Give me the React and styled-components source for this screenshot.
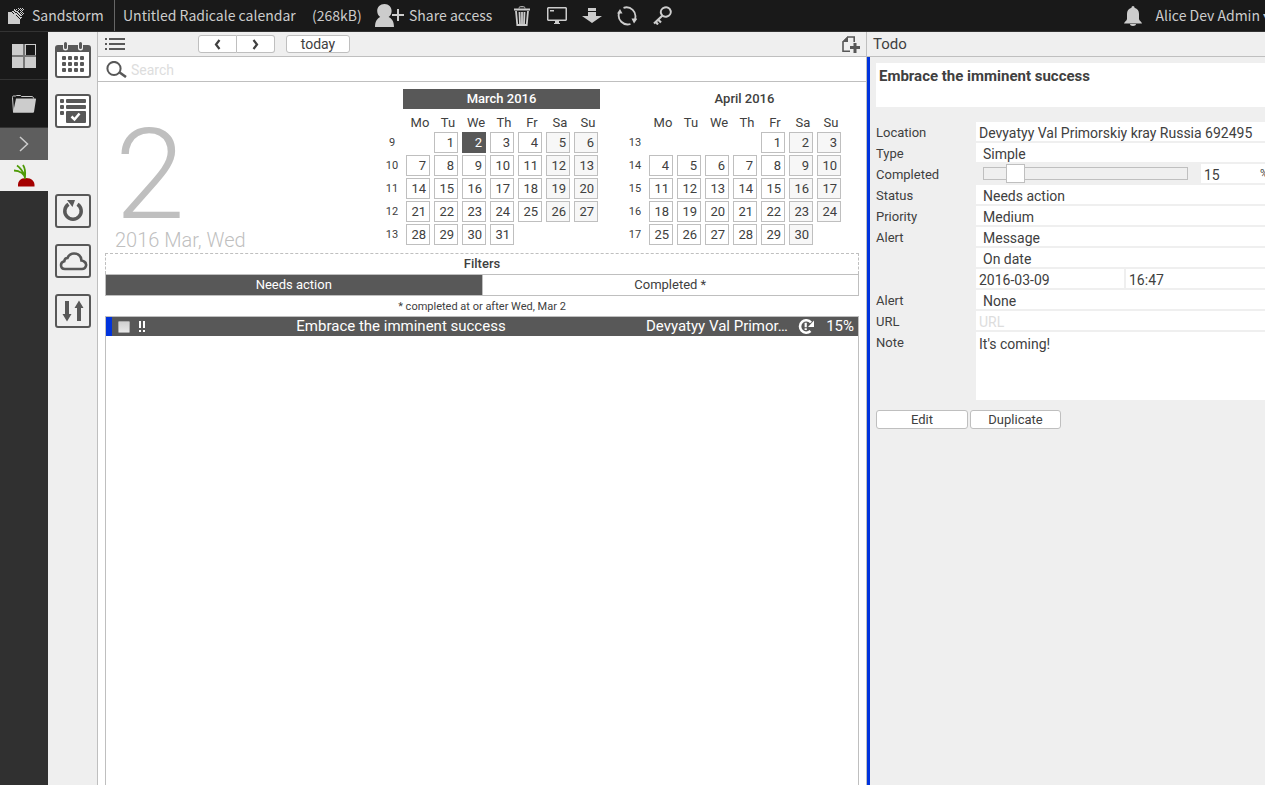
import React from "react";
import styled, { createGlobalStyle } from "styled-components";

const ink = "#404040";
const dark = "#585858";
const line = "#bfbfbf";
const panel = "#efefef";
const blue = "#0033dd";

const GlobalStyle = createGlobalStyle`
  * { box-sizing: border-box; }
  body {
    margin: 0;
    overflow: hidden;
    background: #fff;
    color: ${ink};
    font: 13px/19px Roboto, "Liberation Sans", sans-serif;
  }
  button, input, select, textarea { font: inherit; color: inherit; margin: 0; }
  button { padding: 0; border: 0; background: none; cursor: pointer; }
  svg { display: block; flex: none; }
`;

const Page = styled.div`
  display: flex;
  flex-direction: column;
  height: 100vh;
`;

/* ---------- top bar ---------- */

const TopBar = styled.header`
  display: flex;
  align-items: center;
  flex: none;
  height: 32px;
  border-bottom: 1px solid #333;
  background: #191919;
  color: #ccc;
  font: 14px/31px "Noto Sans CJK JP", "Noto Sans", sans-serif;
  white-space: nowrap;
  overflow: hidden;
`;

const Brand = styled.a`
  display: flex;
  align-items: center;
  gap: 8px;
  height: 31px;
  width: 115px;
  padding-left: 8px;
  border-right: 1px solid #666;
  color: inherit;
  text-decoration: none;
`;

const GrainTitle = styled.button`
  width: 189px;
  padding-left: 8px;
  text-align: left;
`;

const GrainSize = styled.span`
  width: 71px;
  padding-left: 8px;
`;

const ShareButton = styled.button`
  display: flex;
  align-items: center;
  gap: 5px;
  width: 132px;
`;

const TopIcons = styled.div`
  display: flex;
  align-items: center;
  gap: 5px;
`;

const TopIconButton = styled.button`
  display: flex;
  align-items: center;
  justify-content: center;
  width: 30px;
  height: 31px;
`;

const Account = styled.div`
  display: flex;
  align-items: center;
  gap: 14px;
  margin-left: auto;
`;

const AccountButton = styled.button`
  display: flex;
  align-items: center;
  gap: 3px;
`;

const CaretClip = styled.span`
  display: block;
  width: 2px;
  overflow: hidden;
`;

/* ---------- body ---------- */

const Body = styled.div`
  display: flex;
  flex: 1;
  min-height: 0;
`;

const GrainBar = styled.nav`
  flex: none;
  width: 48px;
  background: #303030;
`;

const grainTones = {
  black: { bg: "#191919", height: 48, line: "#333" },
  grey: { bg: "#5e5e5e", height: 32, line: "#5e5e5e" },
  open: { bg: panel, height: 31, line: panel },
};

const GrainItem = styled.button`
  display: flex;
  align-items: center;
  justify-content: center;
  width: 100%;
  height: ${(p) => grainTones[p.$tone].height}px;
  border-bottom: 1px solid ${(p) => grainTones[p.$tone].line};
  background: ${(p) => grainTones[p.$tone].bg};
`;

const AppBar = styled.nav`
  display: flex;
  flex-direction: column;
  align-items: center;
  gap: 16px;
  flex: none;
  width: 50px;
  padding-top: 10px;
  border-right: 1px solid ${line};
  background: ${panel};
`;

const AppGroup = styled.div`
  display: flex;
  flex-direction: column;
  gap: 16px;
  margin-bottom: 50px;
`;

const Center = styled.main`
  display: flex;
  flex-direction: column;
  flex: 1;
  min-width: 0;
`;

const Toolbar = styled.div`
  display: flex;
  align-items: center;
  flex: none;
  height: 25px;
  padding: 0 6px 0 7px;
  border-bottom: 1px solid ${line};
  background: ${panel};
`;

const ButtonGroup = styled.div`
  display: flex;
  margin: 0 11px 0 73px;
`;

const PillButton = styled.button`
  display: flex;
  align-items: center;
  justify-content: center;
  width: ${(p) => p.$width}px;
  height: 18px;
  border: 1px solid ${line};
  border-radius: 3px;
  background: #fff;
  font-size: 14px;
  line-height: 16px;

  ${ButtonGroup} &:first-child { border-radius: 3px 0 0 3px; }
  ${ButtonGroup} &:last-child { border-radius: 0 3px 3px 0; border-left: 0; }
`;

const AddButton = styled.button`
  margin-left: auto;
`;

const SearchBar = styled.label`
  display: flex;
  align-items: center;
  gap: 4px;
  flex: none;
  height: 25px;
  padding: 0 8px;
  border-bottom: 1px solid ${line};
`;

const SearchInput = styled.input`
  flex: 1;
  border: 0;
  padding: 2px 0 0;
  outline: 0;
  background: none;
  font-size: 14px;
  &::placeholder { color: #ddd; }
`;

/* ---------- calendars ---------- */

const Overview = styled.section`
  display: flex;
  flex: none;
  gap: 19px;
  height: 171px;
  padding: 7px 21px 0 17px;
`;

const Today = styled.div`
  flex: 1;
  padding-top: 33px;
  color: ${line};
  font-weight: 300;
  margin-right: -19px;
`;

const BigDay = styled.div`
  font-size: 126px;
  line-height: 106px;
`;

const DateText = styled.div`
  font-size: 20px;
  line-height: 24px;
`;

const MonthTitle = styled.h2`
  width: 197px;
  margin: 0 0 3px 25px;
  background: ${(p) => (p.$active ? dark : "transparent")};
  color: ${(p) => (p.$active ? "#fff" : ink)};
  font-size: 13px;
  font-weight: 500;
  line-height: 20px;
  text-align: center;
`;

const MonthTable = styled.table`
  width: 224px;
  table-layout: fixed;
  border-collapse: separate;
  border-spacing: 4px 2px;
`;

const WeekdayHead = styled.th`
  height: 16px;
  padding: 1px 0 0 4px;
  width: ${(p) => (p.$narrow ? 20 : 24)}px;
  font-weight: 400;
  line-height: 15px;
`;

const WeekNumber = styled.th`
  padding: 0;
  font-size: 11px;
  font-weight: 400;
  line-height: 21px;
`;

const DayCell = styled.td`
  height: 21px;
  padding: 0 3px 0 0;
  border: 1px solid ${(p) => (p.$blank ? "transparent" : p.$selected ? dark : line)};
  background: ${(p) => (p.$blank ? "transparent" : p.$selected ? dark : p.$weekend ? "#f7f7f7" : "#fff")};
  color: ${(p) => (p.$selected ? "#fff" : ink)};
  line-height: 19px;
  text-align: right;
`;

/* ---------- task list ---------- */

const Filters = styled.section`
  flex: none;
  margin: 0 7px;
  text-align: center;
`;

const FiltersTitle = styled.h2`
  margin: 0;
  border: 1px dashed ${line};
  border-bottom: 0;
  font-size: 13px;
  font-weight: 500;
  line-height: 20px;
`;

const FilterTabs = styled.div`
  display: flex;
  border: 1px solid ${line};
`;

const FilterTab = styled.button`
  flex: 1;
  line-height: 20px;
  background: ${(p) => (p.$active ? dark : "#fff")};
  color: ${(p) => (p.$active ? "#fff" : ink)};
  & + & { border-left: 1px solid ${line}; }
`;

const FilterNote = styled.p`
  margin: 0;
  padding-top: 1px;
  font-size: 11px;
  line-height: 19px;
`;

const TaskList = styled.ul`
  flex: 1;
  margin: 0 7px;
  padding: 0;
  border: 1px solid ${line};
  border-bottom: 0;
  list-style: none;
`;

const TaskRow = styled.li`
  display: flex;
  align-items: center;
  height: 19px;
  padding: 0 4px 0 6px;
  border-left: 6px solid ${blue};
  background: ${dark};
  color: #fff;
  font-size: 15px;
`;

const TaskCheck = styled.input`
  appearance: none;
  flex: none;
  width: 12px;
  height: 12px;
  border: 1px solid #aaa;
  border-radius: 1px;
  background: linear-gradient(#d0d0d0, #e8e8e8);
`;

const TaskPriority = styled.span`
  display: flex;
  width: 26px;
  padding-left: 9px;
`;

const TaskName = styled.span`
  flex: 1;
  text-align: center;
`;

const TaskPlace = styled.span`
  width: 146px;
  margin-right: 6px;
  overflow: hidden;
  text-overflow: ellipsis;
  white-space: nowrap;
`;

const TaskPercent = styled.span`
  width: 40px;
  text-align: right;
`;

/* ---------- details ---------- */

const Details = styled.aside`
  display: flex;
  flex-direction: column;
  flex: none;
  width: 399px;
  border-left: 1px solid ${line};
  background: ${panel};
`;

const DetailsTitle = styled.h2`
  margin: 0;
  padding-left: 6px;
  border-bottom: 1px solid ${line};
  font-size: 15px;
  font-weight: 400;
  line-height: 24px;
`;

const Form = styled.form`
  flex: 1;
  padding: 6px 0 0 6px;
  border-left: 3px solid ${blue};
`;

const TitleBox = styled.textarea`
  display: block;
  width: 100%;
  height: 44px;
  margin-bottom: 15px;
  padding: 3px;
  border: 0;
  resize: none;
  background: #fff;
  font-size: 15px;
  font-weight: 700;
  line-height: 20px;
`;

const Fields = styled.div`
  display: grid;
  grid-template-columns: 100px 1fr;
  row-gap: 2px;
`;

const FieldLabel = styled.label`
  height: 19px;
  line-height: 21px;
`;

const TextField = styled.input`
  width: 100%;
  min-width: 0;
  height: 19px;
  padding: 2px 3px 0;
  border: 0;
  background: #fff;
  font-size: 14px;
  line-height: 17px;
  &::placeholder { color: #ddd; }
`;

const SelectField = styled.select`
  appearance: none;
  grid-column: 2;
  height: 19px;
  padding: 3px 7px 0;
  border: 0;
  border-radius: 0;
  background: #fff;
  font-size: 14px;
  line-height: 16px;
`;

const SplitRow = styled.div`
  display: grid;
  grid-column: 2;
  grid-template-columns: 148px 1fr;
  gap: 2px;
`;

const ProgressRow = styled.div`
  display: flex;
  align-items: center;
  gap: 13px;
  height: 19px;
  padding-left: 7px;
`;

const SliderTrack = styled.div`
  display: flex;
  align-items: center;
  flex: none;
  width: 205px;
  height: 13px;
  border: 1px solid ${line};
`;

const Slider = styled.input`
  appearance: none;
  flex: none;
  width: 223px;
  height: 19px;
  margin: 0 -9px;
  background: transparent;
  &::-webkit-slider-thumb {
    appearance: none;
    width: 19px;
    height: 19px;
    border: 1px solid ${line};
    background: #fff;
  }
`;

const PercentField = styled.label`
  display: flex;
  flex: 1;
  min-width: 0;
  overflow: hidden;
  background: #fff;
  font-size: 11px;
`;

const PercentInput = styled(TextField)`
  flex: none;
  width: 59px;
`;

const NoteBox = styled.textarea`
  height: 68px;
  padding: 3px;
  border: 0;
  resize: none;
  background: #fff;
  font-size: 14px;
  line-height: 18px;
`;

const Actions = styled.div`
  display: flex;
  gap: 2px;
  margin-top: 10px;
`;

const ActionButton = styled.button`
  width: ${(p) => p.$width}px;
  height: 19px;
  border: 1px solid ${line};
  border-radius: 3px;
  background: #fff;
  line-height: 17px;
`;

/* ---------- icons ---------- */

const light = "#ccc";

const LogoIcon = () => (
  <svg width="16" height="16" viewBox="0 0 16 16" fill={light}>
    <path d="M0 4h4v1h1v1h2v1h1v1h1v1h1v1h1v1h1v5H0z" />
    <path d="M4 3h2v1h1v1h2v1h1v1h1v1h1v1h1v2h-1v-1h-1V9h-1V8H9V7H7V6H6V5H5V4H4z" />
    <path d="M6 1h1v1h1v1h2v1h1v1h1v1h1v1h1v1h-2V7h-1V6h-1V5H9V4H7V3H6z" />
    <path d="M8 1h1v1H8zM10 0h1v1h-1zM10 2h1v1h-1zM11 1h1v1h-1zM12 0h1v1h-1zM12 2h1v1h-1zM12 4h1v1h-1zM13 1h1v1h-1zM13 3h1v1h-1zM14 0h1v1h-1zM14 2h1v1h-1zM14 4h1v1h-1zM15 1h1v1h-1zM15 5h1v1h-1zM14 6h1v1h-1zM13 5h1v1h-1zM13 9h1v1h-1z" />
  </svg>
);

const ShareIcon = () => (
  <svg width="29" height="25" viewBox="0 0 29 25" fill={light}>
    <path d="M9.500 1C5 1 2.200 4 2.200 8c0 3 1.500 4.800 3 6C2.500 15.500 0 18 0 24h19c0-6-2.500-8.500-5.400-10 1.700-1.300 3-3 3-6 0-4-2.800-7-7.100-7z" />
    <path d="M22 6h2v5h5v2h-5v5h-2v-5h-5v-2h5z" />
  </svg>
);

const TrashIcon = () => (
  <svg width="16" height="20" viewBox="0 0 16 20" fill="none" stroke={light}>
    <path d="M5 2.500C5 .5 6 .7 8 .7s3 0 3 1.800" />
    <path d="M0 3.500h16" strokeWidth="2" />
    <path d="M2 5l1.300 14h9.400L14 5M5.500 6l.5 12M8 6v12M10.500 6L10 18" strokeWidth="1.800" />
  </svg>
);

const MonitorIcon = () => (
  <svg width="20" height="17" viewBox="0 0 20 17" fill={light}>
    <path fillRule="evenodd" d="M1 0h18l1 1v12l-1 1h-7v2h1v1H7v-1h1v-2H1l-1-1V1zM1.500 1.500v11h17v-11z" />
    <path d="M3 3h4v1.500H3z" />
  </svg>
);

const DownloadIcon = () => (
  <svg width="20" height="15" viewBox="0 0 20 15" fill={light}>
    <path d="M6 0h8v3H6zM6 4h8v4h6l-10 7L0 8h6z" />
  </svg>
);

const RefreshIcon = () => (
  <svg width="20" height="20" viewBox="0 0 20 20" fill="none" stroke={light} strokeWidth="1.800">
    <path d="M6.500 1.800A9 9 0 0 1 18 13M13.500 18A9 9 0 0 1 2.200 6.500" />
    <path d="M14.500 12.500h6L17 17.500zM5.500 7.500H0L3 3z" fill={light} stroke="none" />
  </svg>
);

const KeyIcon = () => (
  <svg width="19" height="19" viewBox="0 0 19 19" fill="none" stroke={light}>
    <ellipse cx="12.800" cy="6" rx="5" ry="4.600" strokeWidth="2" transform="rotate(-15 12.800 6)" />
    <path d="M9.500 9.500L1 17.500M5 13.500l3 3M2.500 15.500l2.500 3" strokeWidth="2.200" />
  </svg>
);

const BellIcon = () => (
  <svg width="18" height="20" viewBox="0 0 18 20" fill={light}>
    <path d="M9 0c1 0 1.500.7 1.500 1.800C13.600 2.600 15 5 15 8v5c0 1.500 3 3 3 4.500H0C0 16 3 14.500 3 13V8c0-3 1.400-5.400 4.500-6.200C7.500.7 8 0 9 0zM6 18h6c0 1.300-1.200 2-3 2s-3-.7-3-2z" />
  </svg>
);

const AppsIcon = () => (
  <svg width="24" height="24" viewBox="0 0 24 24">
    <path fill={light} d="M0 0h24v24H0z" />
    <path fill="#777" d="M11 0h2v11h11v2H13v11h-2V13H0v-2h11z" />
    <path fill="#191919" d="M14 1h9v10h-9z" />
  </svg>
);

const FolderIcon = () => (
  <svg width="24" height="18" viewBox="0 0 24 18">
    <path fill="none" stroke={light} d="M1.500 17L.5 2.500C.5 1 1 1 2 1h1.500l1-.5h4l1 1H19c2 0 2.500.5 2.500 2" />
    <path fill={light} d="M4 3.500h19.500l.5.500-2 13-.7.700H1z" />
  </svg>
);

const ChevronIcon = () => (
  <svg width="10" height="16" viewBox="0 0 10 16" fill="none" stroke={light} strokeWidth="1.500">
    <path d="M1 1l7.500 7L1 15" />
  </svg>
);

const RadishIcon = () => (
  <svg width="22" height="23" viewBox="0 0 22 23" fill="none">
    <path d="M5 22.500C4.500 17 7.500 14 13 14s9 3 8.500 8.500z" fill="#a40000" />
    <path d="M12.500 15C11.500 10 7 6.500 1 6.500M12 12C10 8 8 4 4 1.500M12 13c.5-5 0-9-2-12" stroke="#4e9a06" strokeWidth="1.800" />
  </svg>
);

const CalendarIcon = () => (
  <svg width="36" height="36" viewBox="0 0 36 36">
    <rect x="1" y="4" width="34" height="31" rx="2" fill="#fff" stroke={dark} strokeWidth="2" />
    <path fill={dark} d="M1 4h34v6H1z" />
    <g stroke={panel} strokeWidth="5" strokeLinecap="round"><path d="M10.500 1v5M25.500 1v5" /></g>
    <g stroke={dark} strokeWidth="3" strokeLinecap="round"><path d="M10.500 1.500v4M25.500 1.500v4" /></g>
    <g fill={dark}>
      {[14, 20, 26].map((y) =>
        [7, 13, 19, 25].map((x) => <rect key={`${x}-${y}`} x={x} y={y} width="4" height="4" rx="1" />)
      )}
    </g>
  </svg>
);

const TodoIcon = () => (
  <svg width="36" height="34" viewBox="0 0 36 34">
    <rect x="1" y="1" width="34" height="32" rx="2" fill="#fff" stroke={dark} strokeWidth="2" />
    <g fill={dark}>
      <rect x="5" y="5" width="4" height="4" rx="1" />
      <rect x="5" y="11" width="4" height="4" rx="1" />
      <rect x="5" y="17" width="4" height="4" rx="1" />
      <rect x="11" y="5" width="20" height="4" rx="1" />
      <rect x="11" y="11" width="20" height="4" rx="1" />
      <rect x="11" y="17" width="20" height="12" rx="1" />
    </g>
    <path d="M16.500 22.500l3 3 5-6" fill="none" stroke="#fff" strokeWidth="2.500" />
  </svg>
);

const Frame = ({ children }) => (
  <svg width="36" height="34" viewBox="0 0 36 34" fill="none" stroke={dark}>
    <rect x="1" y="1" width="34" height="32" rx="2" strokeWidth="2" />
    {children}
  </svg>
);

const ReloadIcon = () => (
  <Frame>
    <path d="M22.500 10.200A8.200 8.200 0 1 1 13.500 10.200" strokeWidth="3.500" />
    <path d="M12 6h8l-2.500 7z" fill={dark} stroke="none" />
  </Frame>
);

const CloudIcon = () => (
  <Frame>
    <path d="M10 25h17a4 4 0 0 0 2-7.500c-1-.8-2.500-1-2.500-1C26 12 23 9.500 19 9.500c-3.500 0-5.500 2-6.500 4.500-2.500 0-3 1.500-3.200 3.200C7 17.700 6 19 6 21c0 2.300 1.500 4 4 4z" strokeWidth="2.600" />
  </Frame>
);

const SortIcon = () => (
  <Frame>
    <path d="M10 7h4v13h2.500L12 27.500 7.500 20H10zM22 27h4V14h2.500L24 6.500 19.500 14H22z" fill={dark} stroke="none" />
  </Frame>
);

const ListIcon = () => (
  <svg width="20" height="12" viewBox="0 0 20 12" fill={dark}>
    <path d="M0 0h2v2H0zM4 0h16v2H4zM0 5h2v2H0zM4 5h16v2H4zM0 10h2v2H0zM4 10h16v2H4z" />
  </svg>
);

const ArrowIcon = ({ flip }) => (
  <svg width="7" height="11" viewBox="0 0 7 11" fill="none" stroke={ink} strokeWidth="2.200">
    <path d={flip ? "M1.500 1L5 5.500l-3.500 4.500" : "M5.500 1L2 5.500 5.500 10"} />
  </svg>
);

const AddIcon = () => (
  <svg width="18" height="17" viewBox="0 0 18 17">
    <path fill="none" stroke={dark} strokeWidth="1.600" d="M8 15.200H1V6l5-5h6.200v5" />
    <path fill={dark} d="M0 6l6-6v6zM11.500 7h3v3h3.500v3h-3.500v4h-3v-4H8v-3h3.500z" />
  </svg>
);

const SearchIcon = () => (
  <svg width="21" height="17" viewBox="0 0 21 17" fill="none" stroke={dark}>
    <circle cx="8" cy="7.500" r="6.600" strokeWidth="2" />
    <path d="M13 11l7 5" strokeWidth="2.600" />
  </svg>
);

const UrgentIcon = () => (
  <svg width="7" height="11" viewBox="0 0 7 11" fill="#fff">
    <path d="M0 0h2v7H0zM0 9h2v2H0zM4 0h2v7H4zM4 9h2v2H4z" />
  </svg>
);

const AlarmIcon = () => (
  <svg width="16" height="15" viewBox="0 0 16 15" fill="none" stroke="#fff">
    <path d="M13 3.500A6.200 6.200 0 1 0 12.500 12" strokeWidth="2.600" />
    <path d="M10 8h6V1.500z" fill="#fff" stroke="none" />
    <path d="M7.700 3.800v4.500M7.700 9.300V11" strokeWidth="2.200" />
  </svg>
);

/* ---------- page ---------- */

const weekdays = ["Mo", "Tu", "We", "Th", "Fr", "Sa", "Su"];

function Month({ title, firstWeek, offset, days, selected }) {
  const weeks = [0, 1, 2, 3, 4];
  return (
    <div>
      <MonthTitle $active={Boolean(selected)}>{title}</MonthTitle>
      <MonthTable aria-label={title}>
        <thead>
          <tr>
            <WeekdayHead $narrow />
            {weekdays.map((d) => (
              <WeekdayHead key={d}>{d}</WeekdayHead>
            ))}
          </tr>
        </thead>
        <tbody>
          {weeks.map((w) => (
            <tr key={w}>
              <WeekNumber>{firstWeek + w}</WeekNumber>
              {weekdays.map((d, i) => {
                const day = w * 7 + i - offset + 1;
                const blank = day < 1 || day > days;
                return (
                  <DayCell key={d} $blank={blank} $selected={day === selected} $weekend={i > 4}>
                    {blank ? null : day}
                  </DayCell>
                );
              })}
            </tr>
          ))}
        </tbody>
      </MonthTable>
    </div>
  );
}

function SelectRow({ id, label, value, options }) {
  return (
    <>
      {label && <FieldLabel htmlFor={id}>{label}</FieldLabel>}
      <SelectField id={id} defaultValue={value} aria-label={label ? undefined : "Alert time"}>
        {options.map((o) => (
          <option key={o}>{o}</option>
        ))}
      </SelectField>
    </>
  );
}

export default function App() {
  return (
    <Page>
      <GlobalStyle />
      <TopBar>
        <Brand href="#home"><LogoIcon />Sandstorm</Brand>
        <GrainTitle>Untitled Radicale calendar</GrainTitle>
        <GrainSize>(268kB)</GrainSize>
        <ShareButton><ShareIcon />Share access</ShareButton>
        <TopIcons>
          <TopIconButton aria-label="Trash"><TrashIcon /></TopIconButton>
          <TopIconButton aria-label="Debug log"><MonitorIcon /></TopIconButton>
          <TopIconButton aria-label="Download backup"><DownloadIcon /></TopIconButton>
          <TopIconButton aria-label="Restart"><RefreshIcon /></TopIconButton>
          <TopIconButton aria-label="Webkeys"><KeyIcon /></TopIconButton>
        </TopIcons>
        <Account>
          <button aria-label="Notifications"><BellIcon /></button>
          <AccountButton>Alice Dev Admin<CaretClip>▾</CaretClip></AccountButton>
        </Account>
      </TopBar>
      <Body>
        <GrainBar>
          <GrainItem $tone="black" aria-label="Apps"><AppsIcon /></GrainItem>
          <GrainItem $tone="black" aria-label="Grains"><FolderIcon /></GrainItem>
          <GrainItem $tone="grey" aria-label="Expand"><ChevronIcon /></GrainItem>
          <GrainItem $tone="open" aria-label="Radicale"><RadishIcon /></GrainItem>
        </GrainBar>
        <AppBar>
          <AppGroup>
            <button aria-label="Calendar"><CalendarIcon /></button>
            <button aria-label="Todo"><TodoIcon /></button>
          </AppGroup>
          <button aria-label="Reload"><ReloadIcon /></button>
          <button aria-label="Sync"><CloudIcon /></button>
          <button aria-label="Sort"><SortIcon /></button>
        </AppBar>
        <Center>
          <Toolbar>
            <button aria-label="Show lists"><ListIcon /></button>
            <ButtonGroup>
              <PillButton $width={39} aria-label="Previous"><ArrowIcon /></PillButton>
              <PillButton $width={38} aria-label="Next"><ArrowIcon flip /></PillButton>
            </ButtonGroup>
            <PillButton $width={64}>today</PillButton>
            <AddButton aria-label="Add todo"><AddIcon /></AddButton>
          </Toolbar>
          <SearchBar>
            <SearchIcon />
            <SearchInput placeholder="Search" aria-label="Search" />
          </SearchBar>
          <Overview>
            <Today>
              <BigDay>2</BigDay>
              <DateText>2016 Mar, Wed</DateText>
            </Today>
            <Month title="March 2016" firstWeek={9} offset={1} days={31} selected={2} />
            <Month title="April 2016" firstWeek={13} offset={4} days={30} />
          </Overview>
          <Filters>
            <FiltersTitle>Filters</FiltersTitle>
            <FilterTabs>
              <FilterTab $active>Needs action</FilterTab>
              <FilterTab>Completed *</FilterTab>
            </FilterTabs>
            <FilterNote>* completed at or after Wed, Mar 2</FilterNote>
          </Filters>
          <TaskList>
            <TaskRow>
              <TaskCheck type="checkbox" aria-label="Embrace the imminent success" />
              <TaskPriority><UrgentIcon /></TaskPriority>
              <TaskName>Embrace the imminent success</TaskName>
              <TaskPlace>Devyatyy Val Primor…</TaskPlace>
              <AlarmIcon />
              <TaskPercent>15%</TaskPercent>
            </TaskRow>
          </TaskList>
        </Center>
        <Details>
          <DetailsTitle>Todo</DetailsTitle>
          <Form onSubmit={(e) => e.preventDefault()}>
            <TitleBox aria-label="Title" defaultValue="Embrace the imminent success" />
            <Fields>
              <FieldLabel htmlFor="location">Location</FieldLabel>
              <TextField id="location" defaultValue="Devyatyy Val Primorskiy kray Russia 692495" />
              <SelectRow id="type" label="Type" value="Simple" options={["Simple"]} />
              <FieldLabel htmlFor="completed">Completed</FieldLabel>
              <ProgressRow>
                <SliderTrack>
                  <Slider id="completed" type="range" min="0" max="100" defaultValue="15" />
                </SliderTrack>
                <PercentField>
                  <PercentInput defaultValue="15" />%
                </PercentField>
              </ProgressRow>
              <SelectRow id="status" label="Status" value="Needs action" options={["Needs action", "Completed"]} />
              <SelectRow id="priority" label="Priority" value="Medium" options={["Medium"]} />
              <SelectRow id="alert" label="Alert" value="Message" options={["Message", "None"]} />
              <SelectRow id="alert-when" value="On date" options={["On date"]} />
              <SplitRow>
                <TextField aria-label="Alert date" defaultValue="2016-03-09" />
                <TextField aria-label="Alert hour" defaultValue="16:47" />
              </SplitRow>
              <SelectRow id="alert-2" label="Alert" value="None" options={["None", "Message"]} />
              <FieldLabel htmlFor="url">URL</FieldLabel>
              <TextField id="url" placeholder="URL" />
              <FieldLabel htmlFor="note">Note</FieldLabel>
              <NoteBox id="note" defaultValue="It's coming!" />
            </Fields>
            <Actions>
              <ActionButton type="button" $width={92}>Edit</ActionButton>
              <ActionButton type="button" $width={91}>Duplicate</ActionButton>
            </Actions>
          </Form>
        </Details>
      </Body>
    </Page>
  );
}
